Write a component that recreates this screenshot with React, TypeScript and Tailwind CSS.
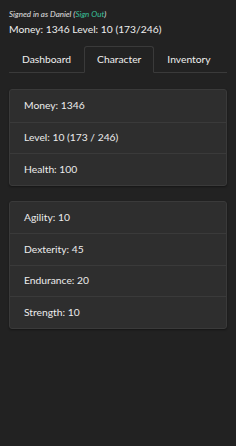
import React, { useState } from 'react';

const stats = ['Money: 1346', 'Level: 10 (173 / 246)', 'Health: 100'];
const attrs = ['Agility: 10', 'Dexterity: 45', 'Endurance: 20', 'Strength: 10'];

const ListGroup: React.FC<{ items: string[] }> = ({ items }) => (
    <ul className="mx-[9px] rounded-[3px] border border-[#3a3a3a] bg-[#2e2e2e] shadow-[0_1px_2px_rgba(0,0,0,0.4)]">
        {items.map((item, i) => (
            <li
                key={item}
                className={`h-[31.5px] flex items-center pl-[14px] text-[10.3px] text-[#ececec] ${i > 0 ? 'border-t border-[#3a3a3a]' : ''}`}
            >
                {item}
            </li>
        ))}
    </ul>
);

const App: React.FC = () => {
    const [tab, setTab] = useState('character');
    const tabs = [
        { id: 'dashboard', label: 'Dashboard' },
        { id: 'character', label: 'Character' },
        { id: 'inventory', label: 'Inventory' },
    ];

    return (
        <div className="min-h-[446px] bg-[#222222] text-white" style={{ fontFamily: 'Lato, "Noto Sans", sans-serif' }}>
            {/* Header */}
            <div className="px-[9px] pt-[8px]">
                <p className="text-[8px] italic text-[#e0e0e0] leading-[12px]">
                    Signed in as Daniel (<a className="text-[#39c09a]">Sign Out</a>)
                </p>
                <p className="text-[10.3px] text-[#eeeeee] leading-[14px] mt-[2px]">Money: 1346 Level: 10 (173/246)</p>
            </div>

            {/* Tabs */}
            <div className="mx-[9px] mt-[10px] flex border-b border-[#3a3a3a]">
                {tabs.map((t) => (
                    <button
                        key={t.id}
                        onClick={() => setTab(t.id)}
                        className={`h-[27px] px-[12px] text-[10.3px] text-[#eeeeee] rounded-t-[3px] -mb-px ${tab === t.id ? 'border border-[#3a3a3a] border-b-[#222222] bg-[#222222]' : 'border border-transparent'}`}
                    >
                        {t.label}
                    </button>
                ))}
            </div>

            <div className="pt-[16px] space-y-[15px]">
                <ListGroup items={stats} />
                <ListGroup items={attrs} />
            </div>
        </div>
    );
};

export default App;
